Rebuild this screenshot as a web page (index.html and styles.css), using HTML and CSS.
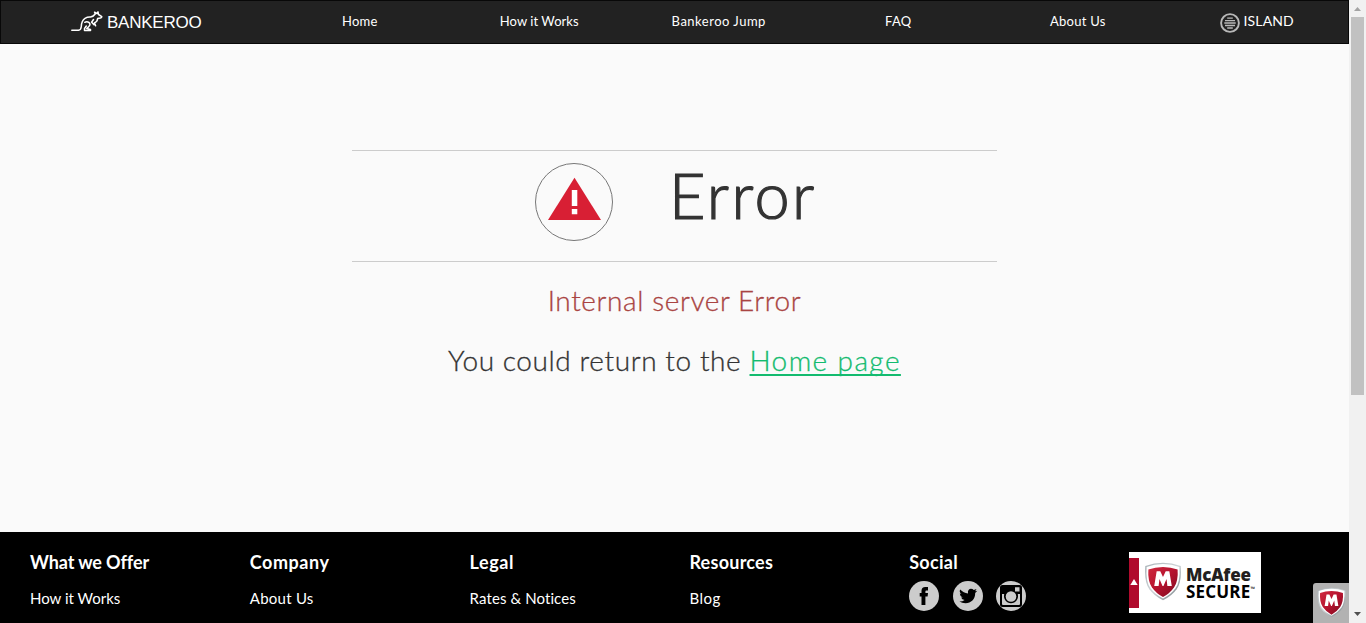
FILE: index.html
```html
<!DOCTYPE html>
<html lang="en">
<head>
<meta charset="utf-8">
<title>Bankeroo - Error</title>
<link rel="stylesheet" href="styles.css">
</head>
<body>
<svg width="0" height="0" class="defs">
  <defs>
    <linearGradient id="rim" x1="0" y1="0" x2="1" y2="1"><stop offset="0" stop-color="#a9b3b8"/><stop offset=".5" stop-color="#cfd5d8"/><stop offset="1" stop-color="#6c777c"/></linearGradient>
    <linearGradient id="red" x1="0" y1="0" x2="1" y2="1"><stop offset="0" stop-color="#d0293f"/><stop offset=".5" stop-color="#b5122e"/><stop offset="1" stop-color="#7d0c20"/></linearGradient>
    <symbol id="shield" viewBox="0 0 38 40">
      <path d="M19 .8 Q28 .8 37.2 4.2 Q38.5 20 33 28 Q28 35 19 39.2 Q10 35 5 28 Q-.5 20 .8 4.2 Q10 .8 19 .8Z" fill="url(#rim)"/>
      <path d="M19 2 Q28 2 35.8 5 Q36.8 20 31.8 27 Q27 33.5 19 37.5 Q11 33.5 6.2 27 Q1.200 20 2.200 5 Q10 2 19 2Z" fill="#fff"/>
      <path d="M19 5 Q27 5.200 34 7.600 Q34.800 19 30.400 26 Q26 32.500 19 36 Q12 32.500 7.600 26 Q3.200 19 4 7.600 Q11 5.200 19 5Z" fill="url(#red)"/>
      <path d="M10 24.500 L12.500 9.500 H16.200 L19 15.500 L21.800 9.500 H25.500 L28 24.500 H23.500 L22.600 17.500 L19.500 24.500 H18.500 L15.400 17.500 L14.500 24.500Z" fill="#fff"/>
    </symbol>
  </defs>
</svg>
<div class="window">
  <div class="page">
    <header class="navbar">
      <a class="brand">
        <svg class="kangaroo" width="32" height="21" viewBox="0 0 32 21" fill="none" stroke="#fff" stroke-width="1.500" stroke-linejoin="round" stroke-linecap="round">
          <path d="M.8 19.200H7.500Q10 19 10.300 15.500Q10.500 9.500 14 7.300Q16.500 5.900 19.500 6.100Q22.500 5.500 24.200 3L23.600 1.200L26 2.500L27 .9L27.500 3.500L30.800 5.600Q30.800 7.300 28 7.300L26.600 7.600Q26.600 10.500 23.500 12L24.600 14.800M22.500 8.500L20.600 11.200L23 13.600M13.800 11.300Q16 10 18.200 11.700Q20 13.700 17.600 15.800L15.800 17.600L19.500 18.500V19.400H13.500V17.500L15.300 15"/>
        </svg>
        <span>BANKEROO</span>
      </a>
      <nav class="menu"><a>Home</a><a class="t2">How it Works</a><a class="t3">Bankeroo Jump</a><a>FAQ</a><a>About Us</a></nav>
      <a class="island">
        <svg width="20" height="20" viewBox="0 0 20 20" fill="none" stroke="#b8b8b8"><circle cx="10" cy="10" r="8.900" stroke-width="1.900"/><path stroke-width="1.300" d="M7.200 5.100h5.600M5 7.600h10M4.300 10h11.400M5 12.500h10M7.200 15h5.600"/></svg>
        <span>ISLAND</span>
      </a>
    </header>
    <main class="content">
      <div class="banner">
        <svg width="78" height="78" viewBox="0 0 78 78"><circle cx="39" cy="39" r="38.500" fill="none" stroke="#777"/><path d="M39.500 14.800L66 57H13Z" fill="#d81f34"/><path d="M36.800 27h5.500v16h-5.500zM36.800 46h5.500v5.200h-5.500z" fill="#fff"/></svg>
        <h1><span>Error</span></h1>
      </div>
      <p class="message"><span>Internal server Error</span></p>
      <p class="return"><span>You could return to the <a>Home page</a></span></p>
    </main>
    <footer class="footer">
      <section><h2 class="f1">What we Offer</h2><a>How it Works</a></section>
      <section><h2 class="f2">Company</h2><a class="g2">About Us</a></section>
      <section><h2 class="f3">Legal</h2><a class="g3">Rates &amp; Notices</a></section>
      <section><h2 class="f4">Resources</h2><a class="g4">Blog</a></section>
      <section><h2 class="f5">Social</h2>
        <div class="social">
          <svg width="30" height="30" viewBox="0 0 30 30"><circle cx="15" cy="15" r="15" fill="#ccc"/><path d="M12.500 24V15.500H10.700V12H12.500V9.800Q12.500 6 16.300 6H19V9.500H17.300Q16.400 9.500 16.400 10.500V12H19L18.600 15.500H16.400V24Z"/></svg>
          <svg width="30" height="30" viewBox="0 0 30 30"><circle cx="15" cy="15" r="15" fill="#ccc"/><path d="M7.200 8.600Q10.500 12.200 15 12.400C14.200 7.500 18.500 6.600 20.800 9L23.500 8L22.200 10.300L24.300 9.800L22.200 12C22.300 18 18 22.300 12.600 22.300Q9 22.300 6.400 20.600Q9.500 20.700 11.600 19Q8.900 18.700 8.100 16.500H9.700Q6.900 15.500 6.800 12.600L8.400 13Q5.800 11 7.200 8.600Z"/></svg>
          <svg width="30" height="30" viewBox="0 0 30 30"><circle cx="15" cy="15" r="15" fill="#ccc"/><path fill-rule="evenodd" d="M6.500 4h17A2.500 2.500 0 0 1 26 6.500v17A2.500 2.500 0 0 1 23.500 26h-17A2.500 2.500 0 0 1 4 23.500v-17A2.500 2.500 0 0 1 6.500 4ZM19 6.200v4.300h4.500V6.200ZM6 13v10q0 1 1 1h16q1 0 1-1V13h-2.400a7 7 0 1 1-13.200 0Z"/><path fill="#000" d="M8.500 11h13v5h-13z"/><circle cx="15" cy="15.500" r="5.300" fill="#ccc"/><circle cx="15" cy="15.500" r="3.400" fill="#ccc"/></svg>
        </div>
      </section>
      <section>
        <div class="seal">
          <i><svg width="10" height="50" viewBox="0 0 10 50"><path d="M1.300 27L5 21L8.700 27Z" fill="#fff"/></svg></i>
          <svg class="seal-shield" width="38" height="39"><use href="#shield"/></svg>
          <div class="seal-text"><b><span>McAfee</span></b><strong><span>SECURE</span><sup>™</sup></strong></div>
        </div>
      </section>
    </footer>
    <div class="badge"><svg width="29" height="31"><use href="#shield"/></svg></div>
  </div>
  <div class="scrollbar">
    <svg width="17" height="17"><path d="M5 11L8.500 7L12 11Z" fill="#a3a3a3"/></svg>
    <div class="thumb"></div>
    <svg class="down" width="17" height="17"><path d="M5 6L12 6L8.500 10Z" fill="#505050"/></svg>
  </div>
</div>
</body>
</html>
```

FILE: styles.css
```css
* { box-sizing: border-box; }
body { margin: 0; overflow: hidden; font-family: Lato, "Liberation Sans", sans-serif; color: #333; }
.defs { position: absolute; }
.window { display: flex; height: 623px; }
.page { position: relative; width: 1349px; height: 623px; display: flex; flex-direction: column; background: #fafafa; }
.navbar { display: flex; height: 44px; background: #222; border: 1px solid #080808; color: #fff; }
.brand { width: 269px; padding: 10px 0 0 70px; display: flex; align-items: flex-start; }
.brand span { font: 17px/24px "Liberation Sans", sans-serif; margin-left: 4px; letter-spacing: -.25px; }
.menu { display: grid; grid-template-columns: repeat(5, 179.5px); text-align: center; font-size: 13px; line-height: 40px; letter-spacing: .25px; }
.t2 { letter-spacing: .05px; }
.t3 { letter-spacing: .5px; }
.island { display: flex; padding: 12px 0 0 52px; font-size: 14px; }
.island span { margin-left: 4px; line-height: 16px; letter-spacing: .15px; }
.content { height: 488px; padding-top: 106px; display: flex; flex-direction: column; align-items: center; }
.banner { width: 645px; height: 112px; border: solid #ccc; border-width: 1px 0; display: flex; padding: 12px 0 0 183px; }
.banner h1 { margin: -6px 0 0 56px; font-size: 63px; line-height: 76px; font-weight: 300; letter-spacing: 2.4px; -webkit-text-stroke: 1.2px; }
.content p { margin: 0; font-size: 28px; line-height: 40px; font-weight: 300; white-space: nowrap; -webkit-text-stroke: .3px; }
.message { color: #a94442; letter-spacing: .6px; }
.content .message { margin-top: 18px; padding-top: 0; margin-bottom: 20px; padding-bottom: 0; line-height: 40px; }
.content .return { letter-spacing: .6px; }
.return a { color: #13bb6f; letter-spacing: 1.4px; text-decoration: underline; text-decoration-thickness: 2px; text-underline-offset: 3px; text-decoration-skip-ink: none; }
.footer { height: 91px; background: #000; color: #fff; padding: 20px 0 0 30px; display: grid; grid-template-columns: repeat(6, 219.8px); }
.footer h2 { margin: 0; font-size: 18px; line-height: 20px; font-weight: 700; }
.footer .f1 { letter-spacing: -.1px; }
.footer .f2 { letter-spacing: .55px; }
.footer .f3 { letter-spacing: .55px; }
.footer .f4 { letter-spacing: .25px; }
.footer .f5 { letter-spacing: .3px; }
.footer section > a { display: block; margin-top: 16px; font-size: 15px; line-height: 20px; }
.g2 { letter-spacing: .25px; }
.g3 { letter-spacing: .1px; }
.g4 { letter-spacing: .5px; }
.social { display: flex; gap: 13.600px; margin-top: 9px; }
.seal { width: 132px; height: 61px; background: #fff; display: flex; color: #231f20; }
.seal i { width: 10px; height: 50px; margin-top: 6px; background: #b00b2d; }
.seal-shield { margin: 10px 0 0 5px; }
.seal-text { margin: 14px 0 0 4px; font-family: "Open Sans", sans-serif; display: flex; flex-direction: column; }
.seal-text b { font-size: 17px; font-weight: 800; line-height: 18px; letter-spacing: -.2px; }
.seal-text strong { font-size: 17px; font-weight: 700; line-height: 15px; display: flex; color: #000; letter-spacing: .2px; }
.seal-text sup { font-size: 6px; line-height: 10px; }
.badge { position: absolute; right: 0; bottom: 0; width: 36px; height: 40px; padding: 4px 0 0 4px; background: #b2b2b2; border-top-left-radius: 3px; }
.scrollbar { width: 17px; height: 623px; background: #f1f1f1; display: flex; flex-direction: column; }
.thumb { width: 13px; height: 378px; margin-left: 2px; background: #c1c1c1; }
.down { margin-top: auto; }
```
